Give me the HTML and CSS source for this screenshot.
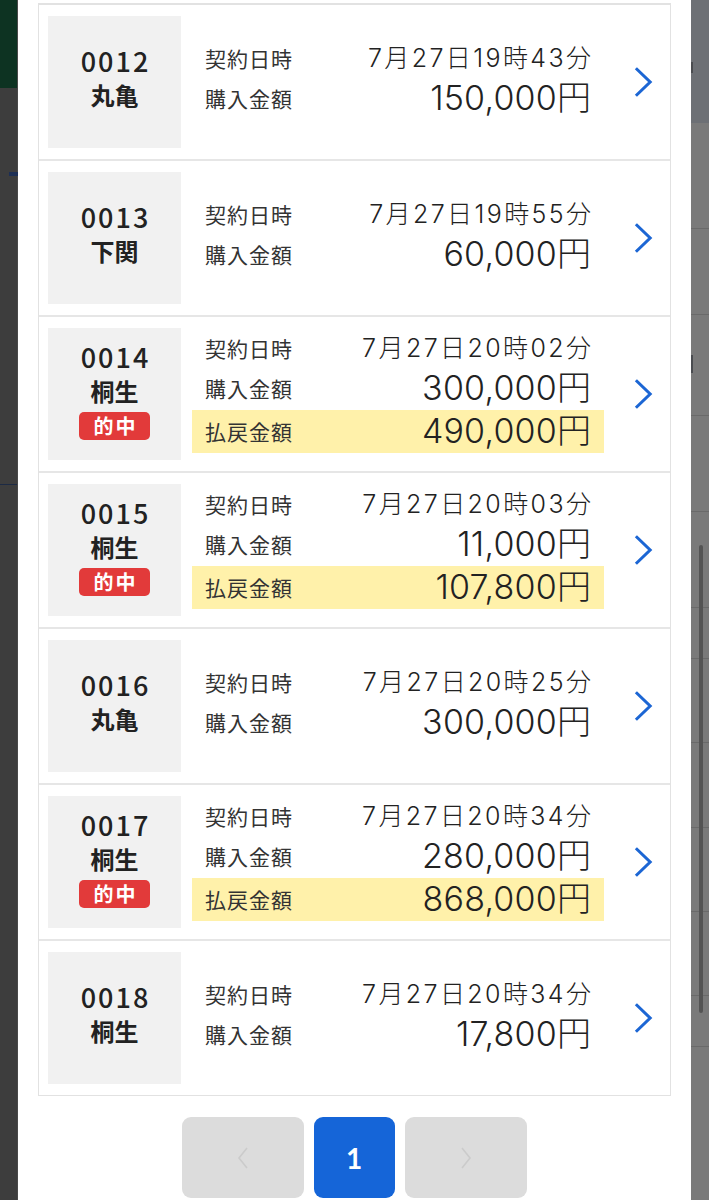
FILE: index.html
```html
<!DOCTYPE html>
<html lang="ja">
<head>
<meta charset="utf-8">
<title>購入履歴</title>
<link rel="stylesheet" href="styles.css">
</head>
<body>
<div class="page">
  <div class="side side-left">
    <div class="sl-top"></div>
    <div class="sl-a"><span class="sl-mark"></span></div>
    <div class="sl-b"></div>
    <div class="sl-c"></div>
  </div>

  <main class="modal">
    <ul class="list">
      <li class="card">
        <div class="tag"><div class="tag-no">0012</div><div class="tag-name">丸亀</div></div>
        <div class="info">
          <div class="row"><span class="lbl">契約日時</span><span class="date">7月27日19時43分</span></div>
          <div class="row"><span class="lbl">購入金額</span><span class="amt">150,000円</span></div>
        </div>
        <div class="go"><svg viewBox="0 0 20 32" class="chev"><path d="M2 1.5 L17 16 L2 30.5"/></svg></div>
      </li>
      <li class="card">
        <div class="tag"><div class="tag-no">0013</div><div class="tag-name">下関</div></div>
        <div class="info">
          <div class="row"><span class="lbl">契約日時</span><span class="date">7月27日19時55分</span></div>
          <div class="row"><span class="lbl">購入金額</span><span class="amt">60,000円</span></div>
        </div>
        <div class="go"><svg viewBox="0 0 20 32" class="chev"><path d="M2 1.5 L17 16 L2 30.5"/></svg></div>
      </li>
      <li class="card">
        <div class="tag"><div class="tag-no">0014</div><div class="tag-name">桐生</div><div class="hit">的中</div></div>
        <div class="info">
          <div class="row"><span class="lbl">契約日時</span><span class="date">7月27日20時02分</span></div>
          <div class="row"><span class="lbl">購入金額</span><span class="amt">300,000円</span></div>
          <div class="row pay"><span class="lbl">払戻金額</span><span class="amt">490,000円</span></div>
        </div>
        <div class="go"><svg viewBox="0 0 20 32" class="chev"><path d="M2 1.5 L17 16 L2 30.5"/></svg></div>
      </li>
      <li class="card">
        <div class="tag"><div class="tag-no">0015</div><div class="tag-name">桐生</div><div class="hit">的中</div></div>
        <div class="info">
          <div class="row"><span class="lbl">契約日時</span><span class="date">7月27日20時03分</span></div>
          <div class="row"><span class="lbl">購入金額</span><span class="amt">11,000円</span></div>
          <div class="row pay"><span class="lbl">払戻金額</span><span class="amt">107,800円</span></div>
        </div>
        <div class="go"><svg viewBox="0 0 20 32" class="chev"><path d="M2 1.5 L17 16 L2 30.5"/></svg></div>
      </li>
      <li class="card">
        <div class="tag"><div class="tag-no">0016</div><div class="tag-name">丸亀</div></div>
        <div class="info">
          <div class="row"><span class="lbl">契約日時</span><span class="date">7月27日20時25分</span></div>
          <div class="row"><span class="lbl">購入金額</span><span class="amt">300,000円</span></div>
        </div>
        <div class="go"><svg viewBox="0 0 20 32" class="chev"><path d="M2 1.5 L17 16 L2 30.5"/></svg></div>
      </li>
      <li class="card">
        <div class="tag"><div class="tag-no">0017</div><div class="tag-name">桐生</div><div class="hit">的中</div></div>
        <div class="info">
          <div class="row"><span class="lbl">契約日時</span><span class="date">7月27日20時34分</span></div>
          <div class="row"><span class="lbl">購入金額</span><span class="amt">280,000円</span></div>
          <div class="row pay"><span class="lbl">払戻金額</span><span class="amt">868,000円</span></div>
        </div>
        <div class="go"><svg viewBox="0 0 20 32" class="chev"><path d="M2 1.5 L17 16 L2 30.5"/></svg></div>
      </li>
      <li class="card">
        <div class="tag"><div class="tag-no">0018</div><div class="tag-name">桐生</div></div>
        <div class="info">
          <div class="row"><span class="lbl">契約日時</span><span class="date">7月27日20時34分</span></div>
          <div class="row"><span class="lbl">購入金額</span><span class="amt">17,800円</span></div>
        </div>
        <div class="go"><svg viewBox="0 0 20 32" class="chev"><path d="M2 1.5 L17 16 L2 30.5"/></svg></div>
      </li>
    </ul>

    <nav class="pager">
      <span class="pbtn off"><svg viewBox="0 0 12 24" class="pchev"><path d="M10 2 L2 12 L10 22"/></svg></span>
      <span class="pbtn cur">1</span>
      <span class="pbtn off"><svg viewBox="0 0 12 24" class="pchev"><path d="M2 2 L10 12 L2 22"/></svg></span>
    </nav>
  </main>

  <div class="side side-right">
    <div class="sr-top"><span class="sr-mark m1"></span></div>
    <div class="sr-seg h106"></div>
    <div class="sr-seg h86"></div>
    <div class="sr-seg h101"><span class="sr-mark m2"></span></div>
    <div class="sr-seg h96"></div>
    <div class="sr-seg h96"></div>
    <div class="sr-seg h51"></div>
    <div class="sr-seg h84"></div>
    <div class="sr-seg h85"></div>
    <div class="sr-seg h84"></div>
    <div class="sr-seg h84"></div>
    <div class="sr-seg h51"></div>
    <div class="sr-rest"></div>
    <span class="thumb"></span>
  </div>
</div>
</body>
</html>
```

FILE: styles.css
```css
* { box-sizing: border-box; }
html, body { margin: 0; padding: 0; }
body {
  width: 709px;
  height: 1200px;
  overflow: hidden;
  background: #ffffff;
  font-family: "Noto Sans CJK JP", "Noto Sans", sans-serif;
  color: #222222;
}
.page {
  display: flex;
  width: 709px;
  height: 1200px;
}

/* left dimmed strip */
.side-left {
  width: 18px;
  flex: none;
  display: flex;
  flex-direction: column;
  background: #3d3d3d;
  border-right: 1px solid #4a4a4a;
}
.sl-top { height: 88px; background: #0d3322; }
.sl-a { height: 396px; position: relative; }
.sl-mark {
  position: absolute;
  left: 9px;
  top: 84px;
  width: 9px;
  height: 4px;
  background: #1d2f55;
}
.sl-b { height: 1px; background: #1c2a44; }
.sl-c { flex: 1; }

/* right dimmed strip */
.side-right {
  width: 18px;
  flex: none;
  display: flex;
  flex-direction: column;
  background: #7a7a7a;
  position: relative;
}
.sr-top { height: 123px; background: #6d7075; position: relative; }
.sr-seg { border-bottom: 1px solid #6a6a6a; position: relative; flex: none; }
.h106 { height: 106px; }
.h86 { height: 86px; }
.h101 { height: 101px; }
.h96 { height: 96px; }
.h51 { height: 51px; }
.h84 { height: 84px; }
.h85 { height: 85px; }
.sr-rest { flex: 1; }
.sr-mark {
  position: absolute;
  left: 0;
  width: 2px;
  background: #4a4c50;
}
.m1 { top: 62px; height: 11px; }
.m2 { top: 40px; height: 18px; }
.thumb {
  position: absolute;
  left: 8px;
  top: 545px;
  width: 4px;
  height: 468px;
  border-radius: 2px;
  background: #545454;
}

/* modal */
.modal {
  flex: 1;
  background: #ffffff;
  padding: 3px 20px 0 20px;
}
.list {
  list-style: none;
  margin: 0;
  padding: 0;
  border: 1px solid #e2e2e2;
  border-top-width: 2px;
}
.card {
  display: flex;
  align-items: center;
  height: 156px;
  padding: 0 0 0 9px;
  border-bottom: 2px solid #e6e6e6;
}
.card:last-child { border-bottom: none; height: 154px; }

.tag {
  width: 133px;
  height: 132px;
  flex: none;
  background: #f1f1f1;
  display: flex;
  flex-direction: column;
  align-items: center;
  justify-content: center;
  padding-bottom: 9px;
}
.tag-no {
  font-size: 27px;
  font-weight: 500;
  line-height: 34px;
  letter-spacing: 2px;
  margin-right: -2px;
  color: #222;
}
.tag-name {
  font-size: 24px;
  font-weight: 700;
  line-height: 34px;
  color: #222;
}
.hit {
  margin-top: 4px;
  width: 71px;
  height: 28px;
  border-radius: 5px;
  background: #e23a3a;
  color: #ffffff;
  font-size: 20px;
  font-weight: 700;
  line-height: 28px;
  text-align: center;
  letter-spacing: 2px;
  padding-left: 2px;
}

.info {
  width: 412px;
  margin-left: 11px;
  margin-bottom: 8px;
  display: flex;
  flex-direction: column;
}
.row {
  display: flex;
  justify-content: space-between;
  align-items: center;
  height: 40px;
  padding: 0 13px;
}
.row.pay {
  height: 43px;
  margin-top: 2px;
  background: #fff1aa;
}
.lbl {
  font-size: 21px;
  letter-spacing: 1px;
  line-height: 40px;
  color: #333;
}
.date {
  font-family: "Inter", "Noto Sans CJK JP", sans-serif;
  font-weight: 300;
  font-size: 25px;
  letter-spacing: 2.4px;
  margin-right: -2.4px;
  line-height: 40px;
  color: #222;
}
.amt {
  font-family: "Inter", "Noto Sans CJK JP", sans-serif;
  font-weight: 300;
  font-size: 34px;
  letter-spacing: 0.2px;
  margin-right: -0.2px;
  line-height: 40px;
  color: #222;
}

.go {
  flex: 1;
  display: flex;
  justify-content: flex-start;
  padding-left: 30px;
}
.chev {
  width: 19px;
  height: 32px;
  fill: none;
  stroke: #1c66d4;
  stroke-width: 3.2;
}

/* pager */
.pager {
  display: flex;
  justify-content: center;
  gap: 10px;
  margin-top: 21px;
  padding-right: 1px;
}
.pbtn {
  height: 81px;
  border-radius: 9px;
  display: flex;
  align-items: center;
  justify-content: center;
}
.pbtn.off { width: 122px; background: #dcdcdc; }
.pbtn.cur {
  width: 81px;
  background: #1565d8;
  color: #ffffff;
  font-size: 28px;
  font-weight: 700;
  font-family: "Lato", "Noto Sans", sans-serif;
}
.pchev {
  width: 12px;
  height: 24px;
  fill: none;
  stroke: #cbcbcb;
  stroke-width: 1.6;
}
```
